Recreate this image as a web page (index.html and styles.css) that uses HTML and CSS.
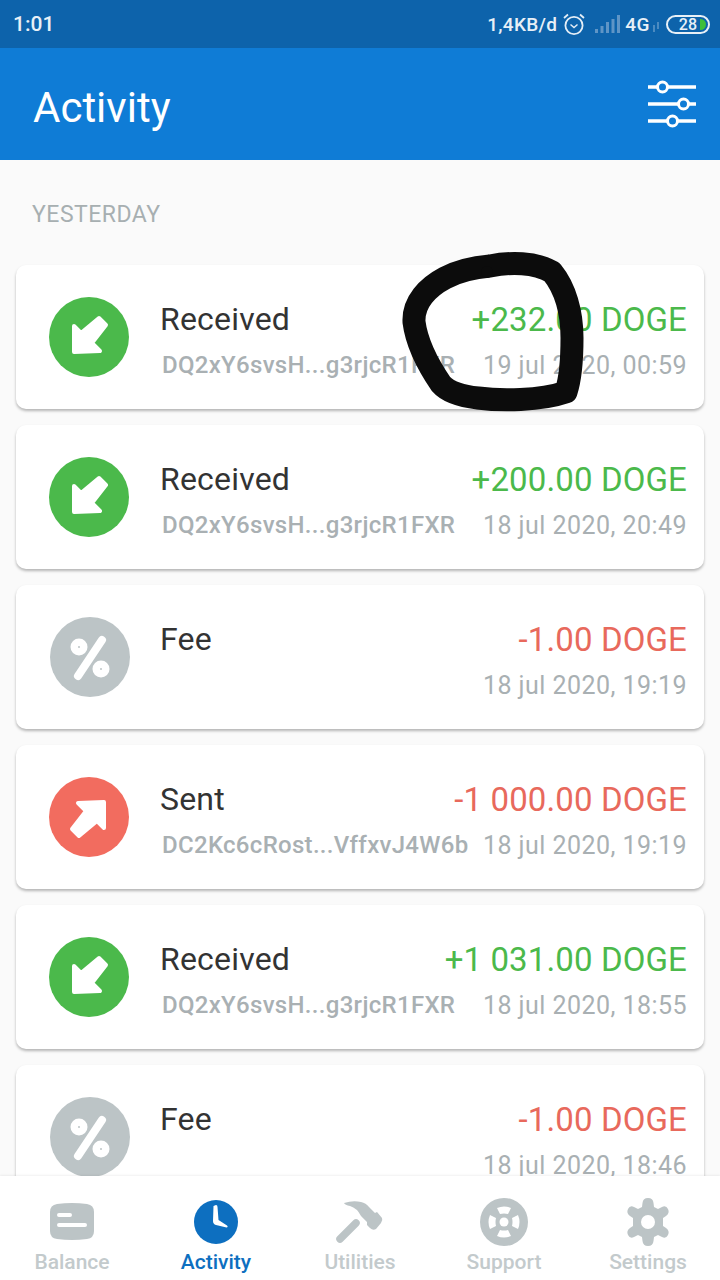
FILE: index.html
```html
<!DOCTYPE html>
<html lang="en">
<head>
  <meta charset="UTF-8" />
  <title>Activity</title>
  <link rel="stylesheet" href="styles.css">
</head>
<body>
  <svg width="0" height="0" class="defs">
    <symbol id="in" viewBox="0 0 80 80">
      <circle cx="40" cy="40" r="40" fill="currentColor" />
      <path d="M25 29 L32 36 L50 21 L57 28 L43 46 L51 54 L25 55 Z" fill="#fff" stroke="#fff" stroke-width="4" stroke-linejoin="round" />
    </symbol>
    <symbol id="out" viewBox="0 0 80 80">
      <circle cx="40" cy="40" r="40" fill="currentColor" />
      <path d="M55 51 L48 44 L30 59 L23 52 L37 34 L29 26 L55 25 Z" fill="#fff" stroke="#fff" stroke-width="4" stroke-linejoin="round" />
    </symbol>
    <symbol id="fee" viewBox="0 0 80 80">
      <circle cx="40" cy="40" r="40" fill="currentColor" />
      <path d="M52 23 L28 59" stroke="#fff" stroke-width="8" stroke-linecap="round" />
      <circle cx="29" cy="30" r="8.5" fill="#fff" />
      <circle cx="51" cy="52" r="8.5" fill="#fff" />
      <circle cx="29" cy="30" r="1" fill="#bcc4c6" />
      <circle cx="51" cy="52" r="1" fill="#bcc4c6" />
    </symbol>
  </svg>

  <div class="page">
    <div class="status">
      <span class="time">1:01</span>
      <div class="status-right">
        <span class="speed">1,4KB/d</span>
        <svg class="alarm" width="24" height="24" viewBox="0 0 24 24" fill="none" stroke="#e3edf6" stroke-width="1.8">
          <circle cx="12" cy="13.5" r="8.6" />
          <path d="M8.5 12.5 L12 15.5 L15.5 12.5" stroke-width="1.5" />
          <path d="M2 6 L6 2.5 M22 6 L18 2.5" />
        </svg>
        <svg class="signal" width="26" height="20" viewBox="0 0 26 20" fill="#5f95c6">
          <rect x="0" y="15" width="3" height="4" />
          <rect x="5.5" y="12" width="3" height="7" />
          <rect x="11" y="8" width="3" height="11" />
          <rect x="16.5" y="5" width="3" height="14" />
          <rect x="22" y="1" width="3" height="18" />
        </svg>
        <span class="net">4G</span>
        <svg class="updown" width="8" height="10" viewBox="0 0 8 10" stroke="#6ea0cc" stroke-width="1.3">
          <path d="M2 10 V3 M6 0 V7" />
        </svg>
        <div class="battery">
          <span class="battery-num">28</span>
          <span class="battery-fill"></span>
        </div>
      </div>
    </div>

    <header class="topbar">
      <h1>Activity</h1>
      <svg width="48" height="48" viewBox="0 0 48 48" fill="none" stroke="#fff" stroke-width="3.4">
        <path d="M0 7 H9 M20 7 H48 M0 24 H30 M41 24 H48 M0 41 H19 M30 41 H48" stroke-linecap="round" />
        <circle cx="14.500" cy="7" r="5" stroke-width="3" />
        <circle cx="35.500" cy="24" r="5" stroke-width="3" />
        <circle cx="24.500" cy="41" r="5" stroke-width="3" />
      </svg>
    </header>

    <main class="list">
      <div class="section-label">YESTERDAY</div>

      <div class="card">
        <svg class="tx-icon green"><use href="#in" /></svg>
        <div class="tx-body">
          <div class="tx-row">
            <span class="tx-name">Received</span>
            <span class="tx-amount plus">+232.00 DOGE</span>
          </div>
          <div class="tx-row sub">
            <span class="tx-addr">DQ2xY6svsH...g3rjcR1FXR</span>
            <span class="tx-date">19 jul 2020, 00:59</span>
          </div>
        </div>
      </div>

      <div class="card">
        <svg class="tx-icon green"><use href="#in" /></svg>
        <div class="tx-body">
          <div class="tx-row">
            <span class="tx-name">Received</span>
            <span class="tx-amount plus">+200.00 DOGE</span>
          </div>
          <div class="tx-row sub">
            <span class="tx-addr">DQ2xY6svsH...g3rjcR1FXR</span>
            <span class="tx-date">18 jul 2020, 20:49</span>
          </div>
        </div>
      </div>

      <div class="card">
        <svg class="tx-icon grey"><use href="#fee" /></svg>
        <div class="tx-body">
          <div class="tx-row">
            <span class="tx-name">Fee</span>
            <span class="tx-amount minus">-1.00 DOGE</span>
          </div>
          <div class="tx-row sub">
            <span class="tx-addr"></span>
            <span class="tx-date">18 jul 2020, 19:19</span>
          </div>
        </div>
      </div>

      <div class="card">
        <svg class="tx-icon red"><use href="#out" /></svg>
        <div class="tx-body">
          <div class="tx-row">
            <span class="tx-name">Sent</span>
            <span class="tx-amount minus">-1 000.00 DOGE</span>
          </div>
          <div class="tx-row sub">
            <span class="tx-addr">DC2Kc6cRost...VffxvJ4W6b</span>
            <span class="tx-date">18 jul 2020, 19:19</span>
          </div>
        </div>
      </div>

      <div class="card">
        <svg class="tx-icon green"><use href="#in" /></svg>
        <div class="tx-body">
          <div class="tx-row">
            <span class="tx-name">Received</span>
            <span class="tx-amount plus">+1 031.00 DOGE</span>
          </div>
          <div class="tx-row sub">
            <span class="tx-addr">DQ2xY6svsH...g3rjcR1FXR</span>
            <span class="tx-date">18 jul 2020, 18:55</span>
          </div>
        </div>
      </div>

      <div class="card">
        <svg class="tx-icon grey"><use href="#fee" /></svg>
        <div class="tx-body">
          <div class="tx-row">
            <span class="tx-name">Fee</span>
            <span class="tx-amount minus">-1.00 DOGE</span>
          </div>
          <div class="tx-row sub">
            <span class="tx-addr"></span>
            <span class="tx-date">18 jul 2020, 18:46</span>
          </div>
        </div>
      </div>
    </main>

    <nav class="tabs">
      <div class="tab">
        <svg width="48" height="48" viewBox="0 0 48 48">
          <path d="M9 6 Q24 4 39 6 Q46 7 46 14 V33 Q46 40 39 41 Q24 43 9 41 Q2 40 2 33 V14 Q2 7 9 6 Z" fill="#bcc4c6" />
          <path d="M11 17 H22 M11 27 H37" stroke="#fff" stroke-width="4" stroke-linecap="round" />
        </svg>
        <span>Balance</span>
      </div>
      <div class="tab active">
        <svg width="48" height="48" viewBox="0 0 48 48">
          <circle cx="24" cy="24" r="22" fill="#0d6fc0" />
          <path d="M21.500 8 L24 7 Q25.500 7 25.500 9 L26.500 22 L35 27.500 Q36.500 29 34.500 29.500 L24 27 Q21 26 21 23 Z" fill="#fff" />
        </svg>
        <span>Activity</span>
      </div>
      <div class="tab">
        <svg width="48" height="48" viewBox="0 0 48 48" fill="#bcc4c6">
          <path d="M20 25 L4 41" stroke="#bcc4c6" stroke-width="7.500" stroke-linecap="round" />
          <path d="M8 5 Q17 2 25 4 Q30 5 33 9 L39 15 L41 14 L46 20 Q47 22 45 25 L40 31 Q37 33 34 30 L31 27 L31 24 L25 18 Q21 10 14 8 Q9 7 8 5 Z" />
        </svg>
        <span>Utilities</span>
      </div>
      <div class="tab">
        <svg width="48" height="48" viewBox="0 0 48 48">
          <circle cx="24" cy="24" r="24" fill="#bcc4c6" />
          <circle cx="24" cy="24" r="4.500" fill="#fff" />
          <path d="M17 10 Q24 7 31 10 L28 16 Q24 15 20 16 Z M38 17 Q41 24 38 31 L32 28 Q33 24 32 20 Z M31 38 Q24 41 17 38 L20 32 Q24 33 28 32 Z M10 31 Q7 24 10 17 L16 20 Q15 24 16 28 Z" fill="#fff" />
        </svg>
        <span>Support</span>
      </div>
      <div class="tab">
        <svg width="48" height="48" viewBox="0 0 48 48">
          <path d="M24 0 Q29 0 29.500 5 L30 9 L34 11 L38 9 Q42 7 44 11 Q46 15 42 18 L39 20 V28 L42 30 Q46 33 44 37 Q42 41 38 39 L34 37 L30 39 L29.500 43 Q29 48 24 48 Q19 48 18.500 43 L18 39 L14 37 L10 39 Q6 41 4 37 Q2 33 6 30 L9 28 V20 L6 18 Q2 15 4 11 Q6 7 10 9 L14 11 L18 9 L18.500 5 Q19 0 24 0 Z" fill="#bcc4c6" />
          <circle cx="24" cy="24" r="7" fill="#fff" />
        </svg>
        <span>Settings</span>
      </div>
    </nav>

    <svg class="scribble" width="720" height="1280" viewBox="0 0 720 1280" fill="none">
      <path d="M490 266 C510 262 535 262 552 272 C565 288 572 312 572 338 C572 360 570 380 566 392 C540 401 500 401 478 398 C460 396 448 392 441 384 C428 365 417 345 414 322 C413 302 428 287 445 278 C460 270 478 267 490 266 Z" stroke="#0c0c0c" stroke-width="23" stroke-linejoin="round" />
      <circle cx="487" cy="272" r="6" fill="#0c0c0c" />
    </svg>
  </div>
</body>
</html>
```

FILE: styles.css
```css
* {
  box-sizing: border-box;
}
body {
  margin: 0;
  background: #fafafa;
  font-family: Roboto, sans-serif;
}
.defs {
  display: block;
  height: 0;
}
.page {
  position: relative;
  width: 720px;
  height: 1280px;
  display: flex;
  flex-direction: column;
  overflow: hidden;
}
.status {
  height: 48px;
  flex: none;
  display: flex;
  align-items: center;
  justify-content: space-between;
  padding: 0 10px 0 13px;
  background: #0d63ab;
  color: #e8f0f7;
  font-weight: 500;
}
.time {
  font-size: 21px;
}
.status-right {
  display: flex;
  align-items: center;
}
.speed {
  font-size: 19px;
  letter-spacing: 0.3px;
}
.alarm {
  margin-left: 5px;
}
.signal {
  margin-left: 9px;
}
.net {
  margin-left: 4px;
  font-size: 19px;
  letter-spacing: 0.5px;
}
.updown {
  margin: 6px 0 0 2px;
}
.battery {
  width: 44px;
  height: 19px;
  margin-left: 6px;
  padding: 2px;
  border: 2px solid #e8f0f7;
  border-radius: 10px;
  display: flex;
  align-items: center;
  justify-content: flex-end;
  position: relative;
}
.battery-num {
  font-size: 16px;
  margin-right: 3px;
  line-height: 15px;
}
.battery-fill {
  width: 6px;
  height: 11px;
  background: #3fbf3a;
  border-radius: 0 6px 6px 0;
}
.topbar {
  height: 112px;
  flex: none;
  display: flex;
  align-items: center;
  justify-content: space-between;
  padding: 0 24px 0 33px;
  background: #0f7cd6;
  color: white;
}
.topbar h1 {
  margin: 6px 0 0;
  font-size: 42px;
  font-weight: 400;
}
.list {
  flex: 1;
  min-height: 0;
  overflow: hidden;
  padding: 0 16px;
}
.section-label {
  padding: 41px 0 0 16px;
  height: 105px;
  font-size: 23px;
  letter-spacing: 0.5px;
  color: #a7afb1;
}
.card {
  height: 144px;
  margin-bottom: 16px;
  display: flex;
  align-items: center;
  padding: 0 17px 0 33px;
  background: white;
  border-radius: 10px;
  box-shadow: 0 2px 3px rgba(0, 0, 0, 0.28);
}
.tx-icon {
  width: 80px;
  height: 80px;
  flex: none;
}
.green {
  color: #4bb94b;
}
.red {
  color: #f26c5f;
}
.grey {
  color: #bcc4c6;
  margin: 0 -1px 0 1px;
}
.tx-body {
  flex: 1;
  margin-left: 32px;
  padding-top: 10px;
}
.tx-row {
  display: flex;
  align-items: center;
  justify-content: space-between;
  height: 40px;
}
.tx-row.sub {
  margin-top: 6px;
}
.tx-name {
  margin-left: -1px;
  font-size: 32px;
  letter-spacing: 0.2px;
  color: #333;
}
.tx-amount {
  font-size: 33px;
  letter-spacing: 0.12px;
}
.plus {
  color: #4bb94b;
}
.minus {
  color: #e8695c;
}
.tx-addr {
  margin-left: 1px;
  font-size: 24px;
  font-weight: 500;
  letter-spacing: 0.3px;
  color: #a9b0b3;
}
.tx-date {
  font-size: 25px;
  letter-spacing: 0.45px;
  color: #a9b0b3;
}
.tabs {
  height: 104px;
  flex: none;
  display: grid;
  grid-template-columns: repeat(5, 1fr);
  padding-top: 22px;
  background: white;
  box-shadow: 0 -1px 2px rgba(0, 0, 0, 0.06);
  position: relative;
}
.tab {
  display: flex;
  flex-direction: column;
  align-items: center;
  font-size: 21px;
  font-weight: 500;
  color: #c3cacc;
}
.tab span {
  margin-top: 4px;
}
.tab.active {
  color: #0d6fc0;
}
.scribble {
  position: absolute;
  top: 0;
  left: 0;
}
```
